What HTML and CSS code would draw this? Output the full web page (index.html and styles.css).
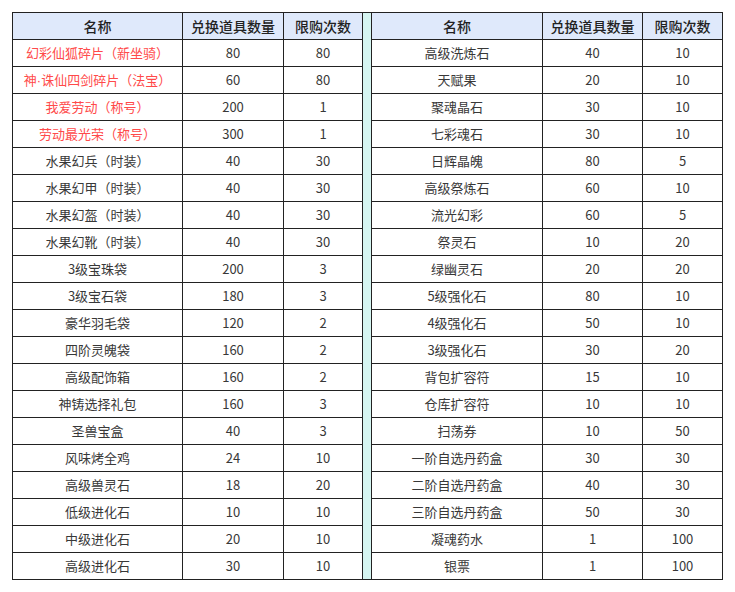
FILE: index.html
```html
<!DOCTYPE html>
<html lang="zh">
<head>
<meta charset="utf-8">
<title>兑换表</title>
<link rel="stylesheet" href="styles.css">
</head>
<body>
<table class="shop">
<colgroup>
<col class="c-name"><col class="c-qty"><col class="c-lim"><col class="c-gap"><col class="c-name2"><col class="c-qty2"><col class="c-lim2">
</colgroup>
<tr class="head"><th>名称</th><th>兑换道具数量</th><th>限购次数</th><td class="gap" rowspan="21"></td><th>名称</th><th>兑换道具数量</th><th>限购次数</th></tr>
<tr><td class="red">幻彩仙狐碎片（新坐骑）</td><td>80</td><td>80</td><td>高级洗炼石</td><td>40</td><td>10</td></tr>
<tr><td class="red">神<span class="dot">·</span>诛仙四剑碎片（法宝）</td><td>60</td><td>80</td><td>天赋果</td><td>20</td><td>10</td></tr>
<tr><td class="red">我爱劳动（称号）</td><td>200</td><td>1</td><td>聚魂晶石</td><td>30</td><td>10</td></tr>
<tr><td class="red">劳动最光荣（称号）</td><td>300</td><td>1</td><td>七彩魂石</td><td>30</td><td>10</td></tr>
<tr><td>水果幻兵（时装）</td><td>40</td><td>30</td><td>日辉晶魄</td><td>80</td><td>5</td></tr>
<tr><td>水果幻甲（时装）</td><td>40</td><td>30</td><td>高级祭炼石</td><td>60</td><td>10</td></tr>
<tr><td>水果幻盔（时装）</td><td>40</td><td>30</td><td>流光幻彩</td><td>60</td><td>5</td></tr>
<tr><td>水果幻靴（时装）</td><td>40</td><td>30</td><td>祭灵石</td><td>10</td><td>20</td></tr>
<tr><td>3级宝珠袋</td><td>200</td><td>3</td><td>绿幽灵石</td><td>20</td><td>20</td></tr>
<tr><td>3级宝石袋</td><td>180</td><td>3</td><td>5级强化石</td><td>80</td><td>10</td></tr>
<tr><td>豪华羽毛袋</td><td>120</td><td>2</td><td>4级强化石</td><td>50</td><td>10</td></tr>
<tr><td>四阶灵魄袋</td><td>160</td><td>2</td><td>3级强化石</td><td>30</td><td>20</td></tr>
<tr><td>高级配饰箱</td><td>160</td><td>2</td><td>背包扩容符</td><td>15</td><td>10</td></tr>
<tr><td>神铸选择礼包</td><td>160</td><td>3</td><td>仓库扩容符</td><td>10</td><td>10</td></tr>
<tr><td>圣兽宝盒</td><td>40</td><td>3</td><td>扫荡券</td><td>10</td><td>50</td></tr>
<tr><td>风味烤全鸡</td><td>24</td><td>10</td><td>一阶自选丹药盒</td><td>30</td><td>30</td></tr>
<tr><td>高级兽灵石</td><td>18</td><td>20</td><td>二阶自选丹药盒</td><td>40</td><td>30</td></tr>
<tr><td>低级进化石</td><td>10</td><td>10</td><td>三阶自选丹药盒</td><td>50</td><td>30</td></tr>
<tr><td>中级进化石</td><td>20</td><td>10</td><td>凝魂药水</td><td>1</td><td>100</td></tr>
<tr><td>高级进化石</td><td>30</td><td>10</td><td>银票</td><td>1</td><td>100</td></tr>
</table>
</body>
</html>
```
FILE: styles.css
```css
html, body {
  margin: 0;
  padding: 0;
  background: #ffffff;
}
body {
  padding: 12px 0 0 12px;
  font-family: "Noto Sans CJK SC", "Noto Sans", sans-serif;
  font-size: 13px;
  color: #383838;
}
.shop {
  border-collapse: collapse;
  table-layout: fixed;
  width: 710px;
}
.c-name { width: 170px; }
.c-qty { width: 101px; }
.c-lim { width: 79px; }
.c-gap { width: 9px; }
.c-name2 { width: 171px; }
.c-qty2 { width: 100px; }
.c-lim2 { width: 80px; }
.shop th,
.shop td {
  border: 1px solid #222222;
  height: 26px;
  padding: 0;
  text-align: center;
  vertical-align: middle;
  line-height: 18px;
  white-space: nowrap;
  overflow: hidden;
}
.shop th {
  background: #dfe9fb;
  color: #222222;
  font-size: 14px;
  font-weight: 500;
}
.shop td.gap {
  background: #d5f5f1;
}
.shop td.red {
  color: #ff4a4a;
}
.dot {
  font-family: "Liberation Sans", sans-serif;
}
```
